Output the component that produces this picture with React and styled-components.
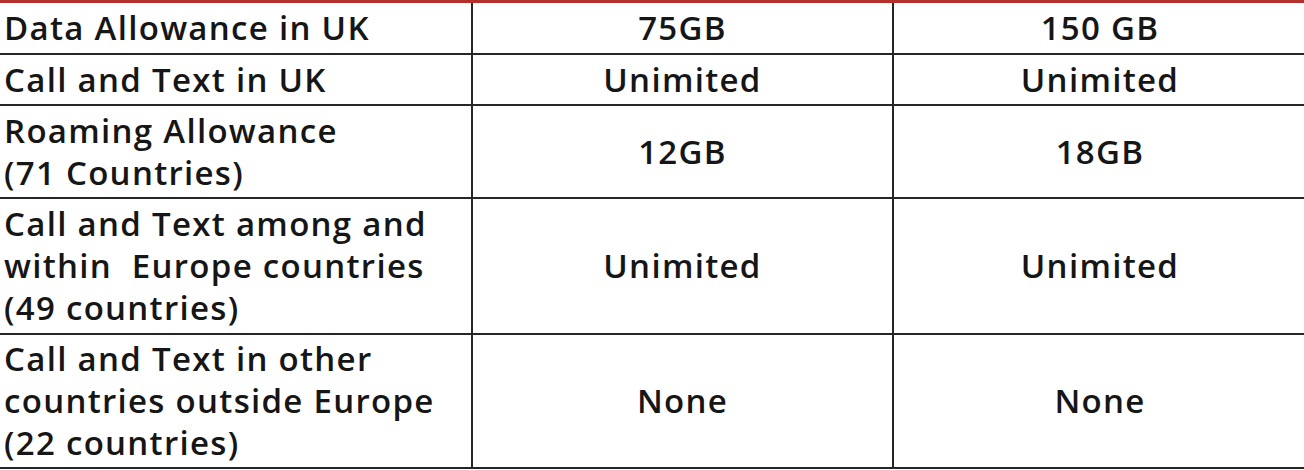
import React from "react";
import styled, { createGlobalStyle } from "styled-components";

const GlobalStyle = createGlobalStyle`
  body {
    margin: 0;
    background: #fff;
    font-family: "Open Sans", "Noto Sans", sans-serif;
  }
`;

const Sheet = styled.div`
  width: 1304px;
  height: 470px;
  overflow: hidden;
  background: #fff;
  border-top: 3px solid #b3302c;
`;

const Table = styled.table`
  width: 1306px;
  border-collapse: collapse;
  table-layout: fixed;
  color: #161616;
  font-size: 33px;
  font-weight: 600;
  letter-spacing: 1.3px;
  line-height: 42px;
`;

const Row = styled.tr`
  height: ${(p) => p.h}px;
`;

const Cell = styled.td`
  border: 2px solid #262626;
  border-top: none;
  padding: 0 0 0 ${(p) => (p.label ? 4 : 0)}px;
  text-align: ${(p) => (p.label ? "left" : "center")};
  vertical-align: middle;
  white-space: nowrap;
  &:first-child {
    border-left: none;
  }
  &:last-child {
    border-right: none;
  }
`;

const rows = [
  { h: 51, label: ["Data Allowance in UK"], a: "75GB", b: "150 GB" },
  { h: 51, label: ["Call and Text in UK"], a: "Unimited", b: "Unimited" },
  { h: 93, label: ["Roaming Allowance", "(71 Countries)"], a: "12GB", b: "18GB" },
  {
    h: 136,
    label: ["Call and Text among and", "within\u00a0 Europe countries", "(49 countries)"],
    a: "Unimited",
    b: "Unimited",
  },
  {
    h: 134,
    label: ["Call and Text in other", "countries outside Europe", "(22 countries)"],
    a: "None",
    b: "None",
  },
];

export default function App() {
  return (
    <>
      <GlobalStyle />
      <Sheet>
        <Table>
          <colgroup>
            <col style={{ width: 472 }} />
            <col style={{ width: 421 }} />
            <col style={{ width: 413 }} />
          </colgroup>
          <tbody>
            {rows.map((r, i) => (
              <Row key={i} h={r.h}>
                <Cell label="1">
                  {r.label.map((l, j) => (
                    <div key={j}>{l}</div>
                  ))}
                </Cell>
                <Cell>{r.a}</Cell>
                <Cell>{r.b}</Cell>
              </Row>
            ))}
          </tbody>
        </Table>
      </Sheet>
    </>
  );
}
